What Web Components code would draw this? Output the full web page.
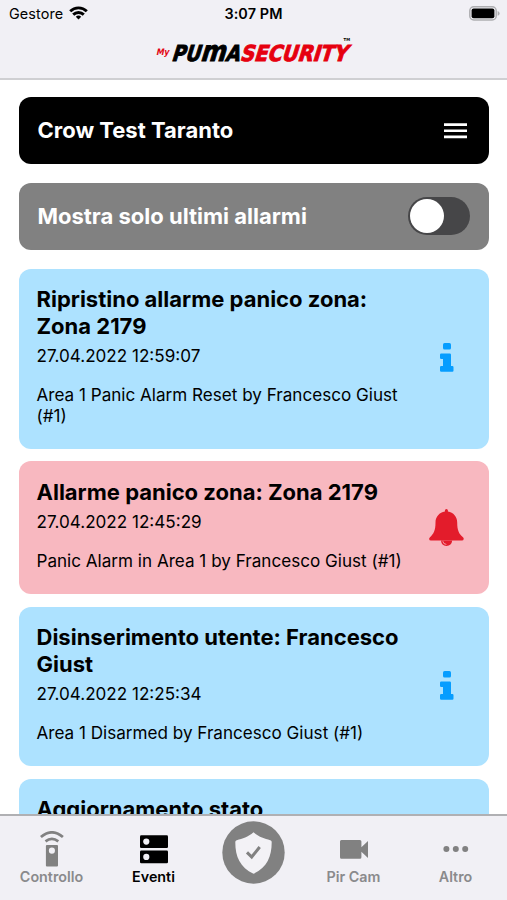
<!DOCTYPE html>
<html lang="it">
<head>
<meta charset="utf-8">
<meta name="viewport" content="width=device-width, initial-scale=1">
<title>My Puma Security</title>
<style>
  html, body { margin: 0; height: 100%; }
  body { font-family: Inter, "Liberation Sans", sans-serif; background: #fff; color: #000; overflow: hidden; }
</style>
</head>
<body>
<puma-app></puma-app>

<script>
// ================================================
// Constants
// ================================================
const EVENTS = [
  {
    kind: 'info',
    title: 'Ripristino allarme panico zona: Zona 2179',
    date: '27.04.2022 12:59:07',
    text: 'Area 1 Panic Alarm Reset by Francesco Giust (#1)',
  },
  {
    kind: 'alarm',
    title: 'Allarme panico zona: Zona 2179',
    date: '27.04.2022 12:45:29',
    text: 'Panic Alarm in Area 1 by Francesco Giust (#1)',
  },
  {
    kind: 'info',
    title: 'Disinserimento utente: Francesco Giust',
    date: '27.04.2022 12:25:34',
    text: 'Area 1 Disarmed by Francesco Giust (#1)',
  },
  { kind: 'info', title: 'Aggiornamento stato', date: '', text: '' },
];

const TABS = [
  { icon: 'remote', label: 'Controllo' },
  { icon: 'events', label: 'Eventi', active: true },
  { icon: 'shield', label: '' },
  { icon: 'camera', label: 'Pir Cam' },
  { icon: 'dots', label: 'Altro' },
];

const ICONS = {
  wifi: `<svg width="19" height="14" viewBox="0 0 19 14" fill="none" stroke="currentColor" stroke-width="2.9">
    <path d="M1.2 5.2a11.9 11.9 0 0 1 16.6 0"/><path d="M4.2 8.6a7.6 7.6 0 0 1 10.6 0"/>
    <path d="M9.5 13.6l-2.7-2.8a3.9 3.9 0 0 1 5.4 0z" fill="currentColor" stroke="none"/></svg>`,
  battery: `<svg width="31" height="15" viewBox="0 0 31 15">
    <rect x=".8" y=".8" width="26.4" height="13.2" rx="4" fill="#f1f0f5" stroke="#aeaeb1" stroke-width="1.5"/>
    <rect x="2.6" y="2.6" width="22.8" height="9.6" rx="2" fill="#000"/>
    <path d="M28.6 5q2 .8 2 2.4t-2 2.4z" fill="#aeaeb1"/></svg>`,
  menu: `<svg width="23" height="16" viewBox="0 0 23 16" fill="#fff">
    <path d="M0 .3h23v2.7H0zM0 6.4h23v2.7H0zM0 12.5h23v2.7H0z"/></svg>`,
  info: `<svg width="14" height="29" viewBox="0 0 14 29" fill="#069dff">
    <rect x="3" y="0" width="8" height="6.6" rx="1.6"/>
    <path d="M1.2 10.5h8.6q1.2 0 1.2 1.2V23h1.4q1.1 0 1.1 1.2v3.4q0 1.2-1.1 1.2H1.2Q0 28.8 0 27.6v-3.4Q0 23 1.2 23H3v-7H1.2Q0 16 0 14.8v-3.1q0-1.2 1.2-1.2z"/></svg>`,
  bell: `<svg width="35" height="37" viewBox="0 0 35 37" fill="#e31c2b">
    <path d="M15.9 2.6V1.6a1.5 1.5 0 0 1 3 0v1c5.5.9 9.3 5.3 9.3 10.9 0 8 1.9 11.3 5.5 14.6.8.8 1.1 1.3 1 2q-.2 1.5-1.8 1.5H2Q.3 31.6.1 30.1q-.1-.9.9-1.9C4.7 24.8 6.5 21.5 6.5 13.5 6.5 7.9 10.4 3.5 15.9 2.6z"/>
    <path d="M12 31.5h11.2q-.6 5.4-5.8 5.4-4.900 0-5.400-5.400z"/>
    <path d="M13.8 32.2q.4 3.100 3.600 3.200" fill="none" stroke="#f8b8c0" stroke-width=".8"/></svg>`,
  remote: `<svg width="24" height="37" viewBox="0 0 24 37" fill="none" stroke="#818181">
    <path d="M.9 6q11-9.2 22 0" stroke-width="2.8"/><path d="M5.5 10.4q6.400-5 12.800 0" stroke-width="2.7"/>
    <path fill-rule="evenodd" d="M6.9 14.1H17q1 0 1 1V34.5q0 1-1 1H6.9q-1 0-1-1V15.1q0-1 1-1zM11.9 16.6a3 3 0 1 0 0 6.1 3 3 0 1 0 0-6.1z" fill="#818181" stroke="none"/></svg>`,
  events: `<svg width="28" height="29" viewBox="0 0 28 29">
    <rect y=".2" width="28" height="12.8" rx="1.3"/><rect y="15.6" width="28" height="12.6" rx="1.3"/>
    <circle cx="6.3" cy="6.6" r="3.1" fill="#f1f0f5"/><circle cx="6.3" cy="21.9" r="3.1" fill="#f1f0f5"/></svg>`,
  shield: `<svg width="63" height="63" viewBox="0 0 63 63">
    <circle cx="31.5" cy="31.5" r="31.2" fill="#818181"/>
    <path d="M31.5 11.3C26 16.2 20.5 17.5 14.8 19.2c-1 .3-1.5.9-1.5 2 0 14.6 4.8 25.2 18.2 31.5 13.4-6.3 18.2-16.9 18.2-31.5 0-1.1-.5-1.7-1.5-2C42.5 17.5 37 16.2 31.5 11.3z" fill="#f3f2f6"/>
    <path d="M25 31.4l4.7 4.6 8-10" fill="none" stroke="#818181" stroke-width="3"/></svg>`,
  camera: `<svg width="28" height="19" viewBox="0 0 28 19" fill="#818181">
    <path d="M1.4 0h18.5q1.5 0 1.5 1.5v5.7L28 1v17l-6.6-6.2v5.4q0 1.5-1.5 1.5H1.4Q0 18.7 0 17.2V1.5Q0 0 1.4 0z"/></svg>`,
  dots: `<svg width="26" height="8" viewBox="0 0 26 8" fill="#818181">
    <circle cx="3.4" cy="4" r="3"/><circle cx="12.8" cy="4" r="3"/><circle cx="22.2" cy="4" r="3"/></svg>`,
};


// ================================================
// Helpers
// ================================================
function attach(host, css, html) {
  host.attachShadow({ mode: 'open' }).innerHTML = `<style>${css}</style>${html}`;
}


// ================================================
// Web Components
// ================================================
class StatusBar extends HTMLElement {
  connectedCallback() {
    attach(this, `
      :host { display: grid; grid-template-columns: 1fr auto 1fr; align-items: center; height: 27px; padding: 0 7px 0 9px; font-size: 14.4px; }
      .carrier { display: flex; align-items: center; gap: 6px; letter-spacing: .1px; }
      .carrier svg { margin-top: -2px; }
      .time { font-weight: 600; letter-spacing: .1px; margin-right: 2px; }
      .battery { justify-self: end; display: flex; margin-top: -1px; }
    `, `
      <span class="carrier"><slot></slot>${ICONS.wifi}</span>
      <span class="time">${this.getAttribute('time')}</span>
      <span class="battery">${ICONS.battery}</span>
    `);
  }
}
customElements.define('status-bar', StatusBar);


class BrandLogo extends HTMLElement {
  connectedCallback() {
    attach(this, `
      :host { display: flex; justify-content: center; }
      svg { overflow: visible; font-family: "DejaVu Sans", sans-serif; font-weight: 700; }
      .word { font-size: 22px; stroke: currentColor; stroke-width: 1; }
      .tall { font-size: 28.5px; }
    `, `
      <svg width="196" height="28" viewBox="0 0 196 28">
        <g transform="translate(0 17.5) skewX(-12)"><text x="0" y="0" font-size="9" fill="#e30613" textLength="13" lengthAdjust="spacingAndGlyphs">My</text></g>
        <g transform="translate(0 23.7) skewX(-17)">
          <text class="word" x="15" y="0" fill="#000" color="#000" textLength="68" lengthAdjust="spacingAndGlyphs">PU<tspan class="tall">m</tspan>A</text>
          <text class="word" x="83.5" y="0" fill="#e6000f" color="#e6000f" textLength="107" lengthAdjust="spacingAndGlyphs">SECURITY</text>
        </g>
        <text x="187.5" y="4" font-size="4" textLength="6.5" lengthAdjust="spacingAndGlyphs">TM</text>
      </svg>
    `);
  }
}
customElements.define('brand-logo', BrandLogo);


class PanelBar extends HTMLElement {
  connectedCallback() {
    attach(this, `
      :host { display: flex; align-items: center; justify-content: space-between; box-sizing: border-box; height: 67px;
        padding: 0 18.5px; border-radius: 12px; background: var(--bar-color, #000); color: #fff; font-size: 22px; font-weight: 700; }
      .label { padding-bottom: var(--label-lift, 2px); }
      ::slotted([slot="action"]) { flex: none; }
    `, `<span class="label"><slot></slot></span><slot name="action"></slot>`);
  }
}
customElements.define('panel-bar', PanelBar);


class MenuButton extends HTMLElement {
  connectedCallback() {
    attach(this, `:host { display: flex; margin-right: 3px; }`, ICONS.menu);
  }
}
customElements.define('menu-button', MenuButton);


class ToggleSwitch extends HTMLElement {
  connectedCallback() {
    attach(this, `
      :host { display: flex; box-sizing: border-box; width: 62px; height: 38px; padding: 2px; border-radius: 19px; background: #464648; }
      .thumb { width: 34px; height: 34px; border-radius: 50%; background: #fff; }
    `, `<span class="thumb"></span>`);
  }
}
customElements.define('toggle-switch', ToggleSwitch);


class EventCard extends HTMLElement {
  connectedCallback() {
    const alarm = this.getAttribute('kind') === 'alarm';
    attach(this, `
      :host { display: flex; flex: none; align-items: center; border-radius: 12px; padding: 17.6px 24px 22.4px 17.5px;
        background: ${alarm ? '#f8b8c0' : '#ade2ff'}; }
      .body { flex: 1; font-size: 17.1px; line-height: 20.5px; }
      h2 { margin: 0 0 6.5px; font-size: 22px; line-height: 26.5px; font-weight: 700; }
      .date { margin-bottom: 19px; min-height: 20px; }
      .icon { flex: none; display: flex; justify-content: center; width: 36px; margin-left: 12px; padding-top: ${alarm ? 5 : 3}px; }
    `, `
      <div class="body">
        <h2><slot name="title"></slot></h2>
        <div class="date"><slot name="date"></slot></div>
        <div><slot></slot></div>
      </div>
      <div class="icon">${alarm ? ICONS.bell : ICONS.info}</div>
    `);
  }
}
customElements.define('event-card', EventCard);


class TabItem extends HTMLElement {
  connectedCallback() {
    const label = this.textContent;
    attach(this, `
      :host { display: flex; flex-direction: column; align-items: center; width: ${label ? 102 : 98}px; color: #8a8a8c; font-size: 14.3px; font-weight: 600; line-height: 18px; }
      :host([active]) { color: #000; }
      .icon { display: flex; align-items: center; justify-content: center; height: ${label ? 38 : 63}px; margin-top: ${label ? 14 : 5}px; }
    `, `<span class="icon">${ICONS[this.getAttribute('icon')]}</span><slot></slot>`);
  }
}
customElements.define('tab-item', TabItem);


class PumaApp extends HTMLElement {
  connectedCallback() {
    const cards = EVENTS.map((e) => `
      <event-card kind="${e.kind}">
        <span slot="title">${e.title}</span><span slot="date">${e.date}</span>${e.text}
      </event-card>`).join('');
    const tabs = TABS.map((t) =>
      `<tab-item icon="${t.icon}"${t.active ? ' active' : ''}>${t.label}</tab-item>`).join('');

    attach(this, `
      :host { display: flex; flex-direction: column; height: 900px; }
      header { flex: none; box-sizing: border-box; height: 80px; border-bottom: 2px solid #cfcfd2; background: #f1f0f5; }
      brand-logo { margin-top: 10px; }
      main { flex: 1; min-height: 0; overflow: hidden; display: flex; flex-direction: column; padding: 17.4px 18.5px 0 19px; }
      panel-bar { flex: none; margin-bottom: 18.6px; }
      .toggle { --bar-color: #818181; --label-lift: 0px; }
      .events { display: flex; flex-direction: column; gap: 12.5px; }
      nav { flex: none; box-sizing: border-box; height: 86px; display: flex; justify-content: center; border-top: 2px solid #b0b0b3; background: #f1f0f5; }
    `, `
      <header>
        <status-bar time="3:07 PM">Gestore</status-bar>
        <brand-logo></brand-logo>
      </header>
      <main>
        <panel-bar>Crow Test Taranto<menu-button slot="action"></menu-button></panel-bar>
        <panel-bar class="toggle">Mostra solo ultimi allarmi<toggle-switch slot="action"></toggle-switch></panel-bar>
        <div class="events">${cards}</div>
      </main>
      <nav>${tabs}</nav>
    `);
  }
}
customElements.define('puma-app', PumaApp);
</script>
</body>
</html>
